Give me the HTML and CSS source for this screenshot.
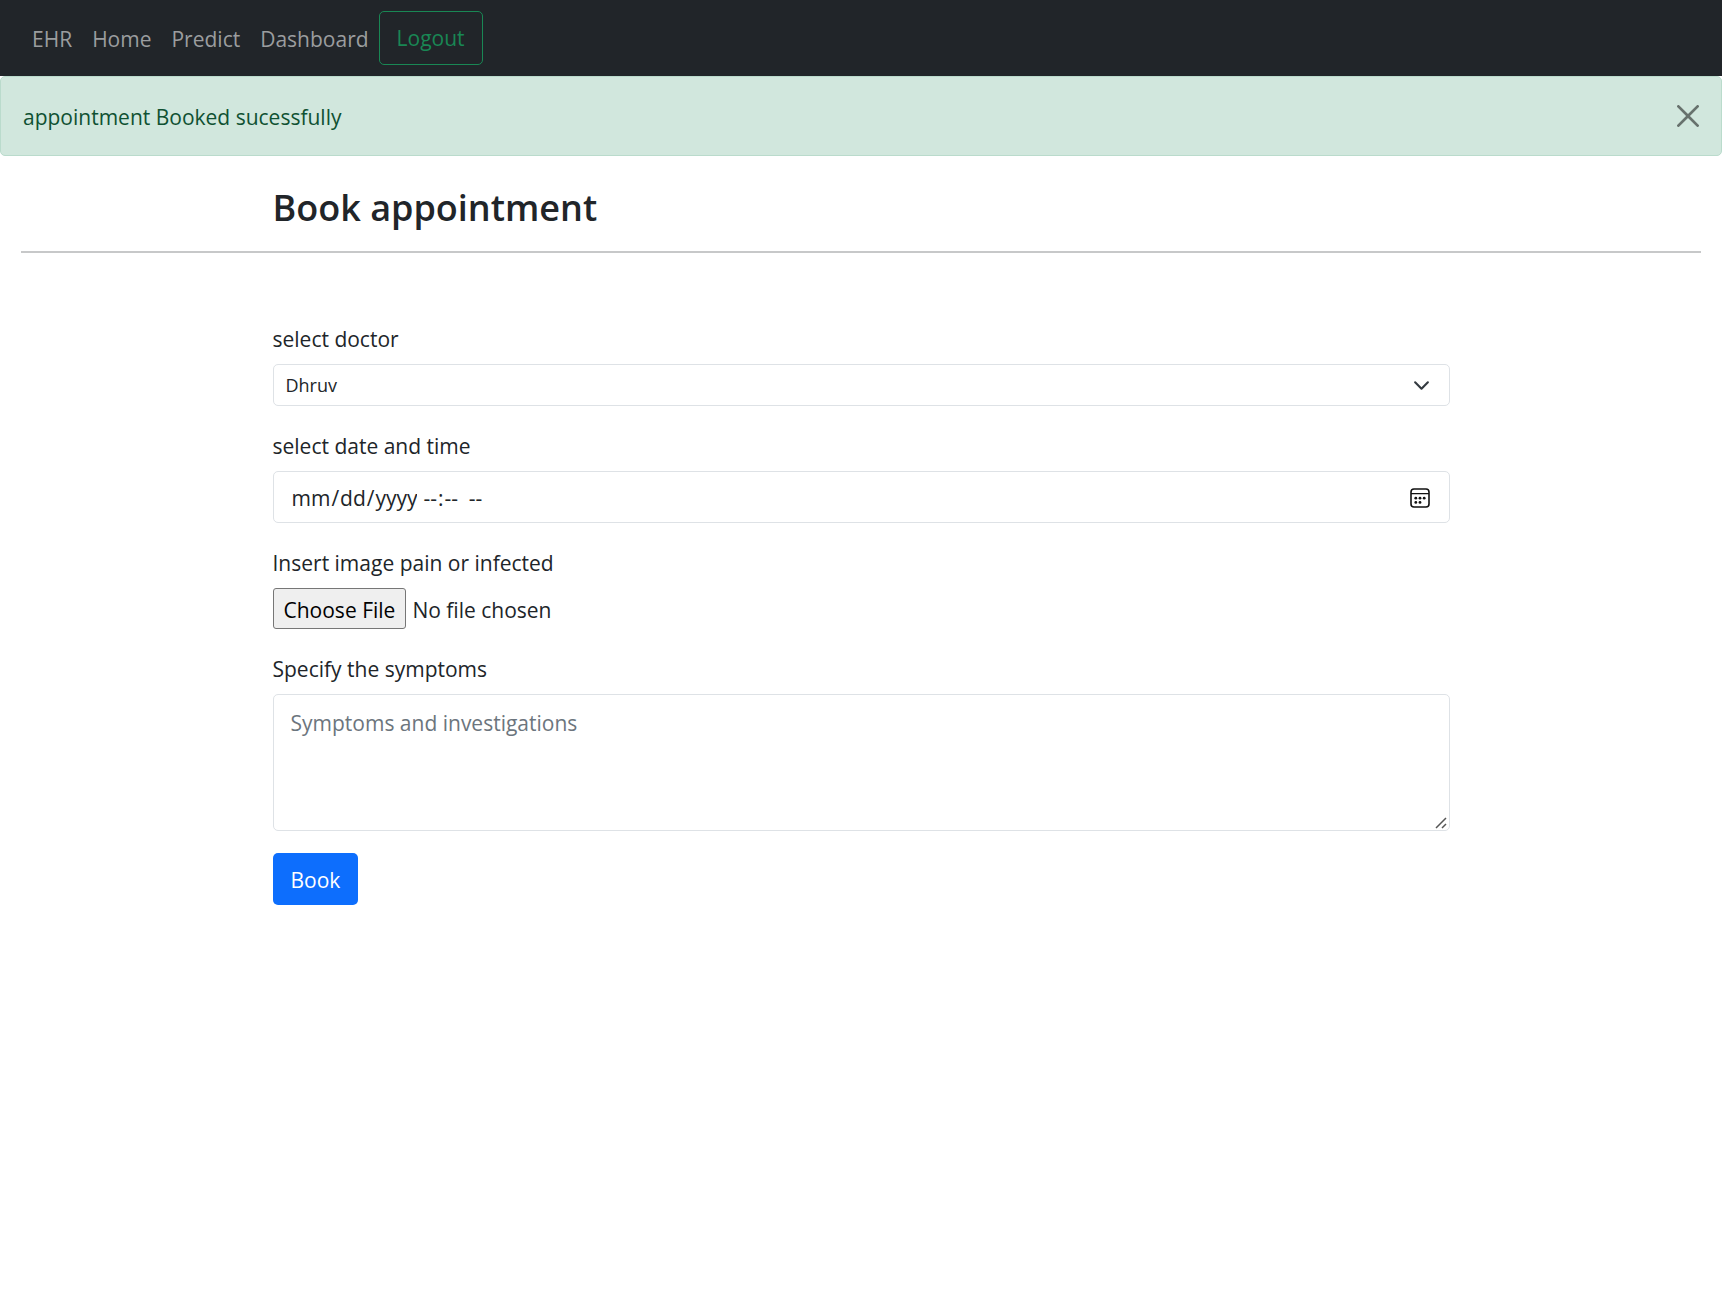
FILE: index.html
```html
<!DOCTYPE html>
<html lang="en">
<head>
  <meta charset="utf-8">
  <meta name="viewport" content="width=device-width, initial-scale=1">
  <title>Book appointment</title>
  <link rel="stylesheet" href="styles.css">
</head>
<body>
  <nav class="navbar">
    <a class="nav-link" href="#">EHR</a>
    <a class="nav-link" href="#">Home</a>
    <a class="nav-link" href="#">Predict</a>
    <a class="nav-link" href="#">Dashboard</a>
    <button class="btn btn-outline" type="button">Logout</button>
  </nav>

  <div class="alert" role="alert">
    <span class="alert-text">appointment Booked sucessfully</span>
    <button class="btn-close" type="button" aria-label="Close">
      <svg viewBox="0 0 16 16" width="22" height="22" aria-hidden="true"><path d="M.293.293a1 1 0 0 1 1.414 0L8 6.586 14.293.293a1 1 0 1 1 1.414 1.414L9.414 8l6.293 6.293a1 1 0 0 1-1.414 1.414L8 9.414l-6.293 6.293a1 1 0 0 1-1.414-1.414L6.586 8 .293 1.707a1 1 0 0 1 0-1.414z"/></svg>
    </button>
  </div>

  <header class="page-head">
    <h1 class="container title">Book appointment</h1>
    <hr class="rule">
  </header>

  <form class="container form">
    <div class="field">
      <label for="doctor">select doctor</label>
      <select class="select" id="doctor">
        <option>Dhruv</option>
      </select>
    </div>
    <div class="field">
      <label for="when">select date and time</label>
      <input class="control date" type="datetime-local" id="when">
    </div>
    <div class="field">
      <label for="image">Insert image pain or infected</label>
      <input class="file" type="file" id="image">
    </div>
    <div class="field">
      <label for="symptoms">Specify the symptoms</label>
      <textarea class="control area" id="symptoms" placeholder="Symptoms and investigations"></textarea>
    </div>
    <button class="btn btn-primary" type="submit">Book</button>
  </form>
</body>
</html>
```

FILE: styles.css
```css
* {
  box-sizing: border-box;
}

body {
  margin: 0;
  background: #fff;
  color: #212529;
  font: 21px/32px "Segoe UI", "Open Sans", "Noto Sans", sans-serif;
}

input,
select,
textarea,
button {
  margin: 0;
  color: inherit;
  font: inherit;
}

.container {
  width: calc(100% - 48px);
  max-width: 1177px;
  margin: 0 auto;
}

.navbar {
  display: flex;
  align-items: center;
  padding: 11px 22px;
  background: #212529;
}

.nav-link {
  padding: 2px 10px 0;
  color: #9b9d9f;
  text-decoration: none;
}

.btn {
  padding: 10px 17px 8px;
  border: 1px solid transparent;
  border-radius: 5px;
}

.btn-outline {
  padding-bottom: 10px;
  border-color: #198754;
  background: transparent;
  color: #198754;
}

.btn-primary {
  background: #0d6efd;
  color: #fff;
}

.alert {
  display: flex;
  align-items: center;
  justify-content: space-between;
  padding: 22px;
  border: 1px solid #badbcc;
  border-radius: 5px;
  background: #d1e7dd;
  color: #0f5132;
}

.alert-text {
  padding-top: 2px;
}

.btn-close {
  display: flex;
  padding: 0;
  border: 0;
  background: none;
  color: #000;
  opacity: 0.5;
}

.title {
  padding: 29px 0 20px;
  font-size: 36px;
  font-weight: 600;
  line-height: 46px;
}

.rule {
  height: 2px;
  margin: 0 21px;
  border: 0;
  background: #c7c8c9;
}

.form {
  padding: 70px 0;
}

.field {
  display: flex;
  flex-direction: column;
  gap: 9px;
  margin-bottom: 24px;
}

.field:last-of-type {
  margin-bottom: 22px;
}

.control,
.select {
  width: 100%;
  border: 1px solid #dee2e6;
  border-radius: 5px;
  background-color: #fff;
}

.select {
  height: 42px;
  padding: 0 12px;
  appearance: none;
  background-image: url("data:image/svg+xml,%3Csvg xmlns='http://www.w3.org/2000/svg' viewBox='0 0 16 16'%3E%3Cpath fill='none' stroke='%23343a40' stroke-linecap='round' stroke-linejoin='round' stroke-width='2' d='m2 5 6 6 6-6'/%3E%3C/svg%3E");
  background-position: right 19px center;
  background-repeat: no-repeat;
  background-size: 17px;
  font-size: 18px;
}

.date {
  height: 52px;
  padding: 10px 19px 8px 17px;
}

/* The hour field slides over the separator, so a plain space shows between date and time. */
.date::-webkit-datetime-edit-hour-field {
  position: relative;
  margin-left: -12px;
  padding-left: 6px;
  background: #fff;
}

.date::-webkit-datetime-edit-ampm-field {
  margin-left: 6px;
}

.date::-webkit-calendar-picker-indicator {
  width: 20px;
  height: 20px;
  padding: 0;
  background: url("data:image/svg+xml,%3Csvg xmlns='http://www.w3.org/2000/svg' viewBox='0 0 20 20'%3E%3Crect x='1' y='1' width='18' height='18' rx='3' fill='none' stroke='%23111' stroke-width='1.6'/%3E%3Cpath d='M1 5.6h18' stroke='%23111' stroke-width='1.4'/%3E%3Cg fill='%23111'%3E%3Ccircle cx='5.8' cy='10.2' r='1.4'/%3E%3Ccircle cx='10' cy='10.2' r='1.4'/%3E%3Ccircle cx='14.2' cy='10.2' r='1.4'/%3E%3Ccircle cx='5.8' cy='14.4' r='1.4'/%3E%3Ccircle cx='10' cy='14.4' r='1.4'/%3E%3C/g%3E%3C/svg%3E") center / 20px no-repeat;
}

.file {
  height: 41px;
}

.file::file-selector-button {
  height: 41px;
  margin: 0 6px 0 0;
  padding: 2px 10px 0;
  border: 1px solid #767676;
  border-radius: 3px;
  background: #efefef;
  color: #000;
  font: inherit;
}

.area {
  height: 137px;
  padding: 12px 17px;
  resize: vertical;
}

.area::placeholder {
  color: #6c757d;
}

.area::-webkit-resizer {
  background: url("data:image/svg+xml,%3Csvg xmlns='http://www.w3.org/2000/svg' viewBox='0 0 15 15'%3E%3Cpath stroke='%23555' stroke-width='1.5' d='M2 13 12 3M8 13l4-4'/%3E%3C/svg%3E") right bottom / 15px no-repeat;
}
```
